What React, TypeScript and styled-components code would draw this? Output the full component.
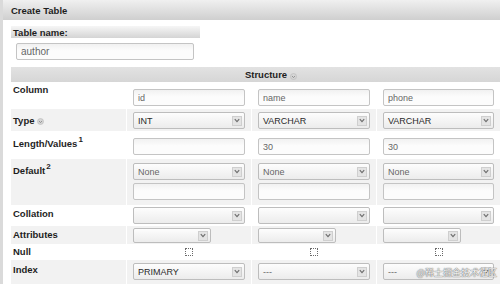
import styled, { createGlobalStyle } from "styled-components";

const GlobalStyle = createGlobalStyle`
  html, body {
    margin: 0;
    padding: 0;
    background: #fff;
    overflow: hidden;
  }
  body {
    font-family: "Liberation Sans", Arial, sans-serif;
    color: #222;
  }
`;

const Frame = styled.div`
  position: relative;
  width: 497px;
  height: 284px;
  border-left: 3px solid #dadada;
  overflow: hidden;
`;

const TitleBar = styled.div`
  height: 20px;
  box-sizing: border-box;
  padding: 5px 8px 0;
  background: linear-gradient(#f0f0f0, #cfcfcf);
  font-size: 9.5px;
  font-weight: bold;
  line-height: 12px;
  color: #1e1e1e;
`;

const Body = styled.div`
  padding: 6px 0 0 8px;
`;

const NameLabel = styled.div`
  width: 187px;
  height: 12px;
  padding-left: 2px;
  background: linear-gradient(#f6f6f6, #d4d4d4);
  font-size: 9.5px;
  font-weight: bold;
  line-height: 13px;
  color: #1e1e1e;
`;

const TextInput = styled.input<{ $w: number; $size?: number }>`
  display: block;
  box-sizing: border-box;
  width: ${(p) => p.$w}px;
  height: 17px;
  margin: 0;
  padding: 0 4px;
  border: 1px solid #c4c4c4;
  border-radius: 2px;
  background: linear-gradient(#f1f1f1, #fcfcfc 45%);
  font-family: "Liberation Sans", Arial, sans-serif;
  font-size: ${(p) => p.$size ?? 9}px;
  color: #666;
  outline: none;
`;

const NameInput = styled(TextInput)`
  margin: 5px 0 0 5px;
`;

const Structure = styled.div`
  margin-top: 7px;
  width: 490px;
  display: flex;
  flex-direction: column;
  gap: 1px;
`;

const Header = styled.div`
  height: 15px;
  display: flex;
  align-items: center;
  justify-content: center;
  gap: 3px;
  padding-left: 30px;
  background: linear-gradient(#e2e2e2, #d6d6d6);
  font-size: 9.5px;
  font-weight: bold;
  color: #1e1e1e;
`;

const Row = styled.div<{ $h: number }>`
  display: grid;
  grid-template-columns: 115px 124px 124px 123px;
  column-gap: 1px;
  height: ${(p) => p.$h}px;
`;

const LabelCell = styled.div<{ $pt: number; $alt?: boolean }>`
  padding: ${(p) => p.$pt}px 0 0 2px;
  background: ${(p) => (p.$alt ? "#f2f2f2" : "#fff")};
  font-size: 9.5px;
  font-weight: bold;
  line-height: 12px;
  color: #1e1e1e;
  display: flex;
  align-items: flex-start;
  gap: 3px;
`;

const Sup = styled.span`
  display: inline-block;
  font-size: 8px;
  line-height: 8px;
  margin: -2px 0 0 -2px;
`;

const Cell = styled.div<{ $pt: number; $alt?: boolean; $center?: boolean }>`
  box-sizing: border-box;
  padding: ${(p) => p.$pt}px 0 0 ${(p) => (p.$center ? 0 : 6)}px;
  background: ${(p) => (p.$alt ? "#f2f2f2" : "#fff")};
  display: flex;
  flex-direction: column;
  align-items: ${(p) => (p.$center ? "center" : "flex-start")};
  gap: 3px;
`;

const SelectBox = styled.div<{ $w: number; $h?: number }>`
  box-sizing: border-box;
  width: ${(p) => p.$w}px;
  height: ${(p) => p.$h ?? 17}px;
  display: flex;
  align-items: center;
  justify-content: space-between;
  padding: 0 2px 0 4px;
  border: 1px solid #bdbdbd;
  border-radius: 2px;
  background: linear-gradient(#fdfdfd, #ececec);
  font-size: 9px;
`;

const SelectText = styled.span<{ $muted?: boolean }>`
  color: ${(p) => (p.$muted ? "#666" : "#2a2a2a")};
  white-space: nowrap;
`;

const Arrow = styled.span`
  box-sizing: border-box;
  width: 10px;
  height: 10px;
  display: flex;
  align-items: center;
  justify-content: center;
  border: 1px solid #cfcfcf;
  background: #e4e4e4;
`;

const Check = styled.span`
  box-sizing: border-box;
  width: 8px;
  height: 8px;
  border: 1px dotted #6a6a6a;
  background: #fff;
`;

const Watermark = styled.div`
  position: absolute;
  right: 3px;
  bottom: 5px;
  font-family: "Noto Sans CJK SC", "Liberation Sans", sans-serif;
  font-size: 9px;
  line-height: 12px;
  color: rgba(255, 255, 255, 0.92);
  text-shadow: 0 0 1px #555, 0 0 1px #777;
`;

const HelpIcon = () => (
  <svg width="7" height="7" viewBox="0 0 7 7" style={{ marginTop: 3 }}>
    <circle cx="3.5" cy="3.5" r="3" fill="#d6d6d6" stroke="#b8b8b8" strokeWidth="0.6" />
    <path d="M2 3 L3.5 4.6 L5 3" fill="none" stroke="#8a8a8a" strokeWidth="0.9" />
  </svg>
);

const Select = ({ w, text, muted, h }: { w: number; text?: string; muted?: boolean; h?: number }) => (
  <SelectBox $w={w} $h={h}>
    <SelectText $muted={muted}>{text}</SelectText>
    <Arrow>
      <svg width="6" height="5" viewBox="0 0 6 5">
        <path d="M0.8 1.2 L3 3.6 L5.2 1.2" fill="none" stroke="#6e6e6e" strokeWidth="1.2" />
      </svg>
    </Arrow>
  </SelectBox>
);

const columns = [
  { name: "id", type: "INT", length: "", index: "PRIMARY" },
  { name: "name", type: "VARCHAR", length: "30", index: "---" },
  { name: "phone", type: "VARCHAR", length: "30", index: "---" },
];

export default function App() {
  return (
    <Frame>
      <GlobalStyle />
      <TitleBar>Create Table</TitleBar>
      <Body>
        <NameLabel>Table name:</NameLabel>
        <NameInput $w={178} $size={10} defaultValue="author" />
        <Structure>
          <Header>
            Structure <HelpIcon />
          </Header>

          <Row $h={25}>
            <LabelCell $pt={1}>Column</LabelCell>
            {columns.map((c, i) => (
              <Cell key={i} $pt={6}>
                <TextInput $w={i === 2 ? 111 : 112} defaultValue={c.name} />
              </Cell>
            ))}
          </Row>

          <Row $h={22}>
            <LabelCell $pt={6} $alt>
              Type <HelpIcon />
            </LabelCell>
            {columns.map((c, i) => (
              <Cell key={i} $pt={3} $alt>
                <Select w={i === 2 ? 111 : 112} text={c.type} />
              </Cell>
            ))}
          </Row>

          <Row $h={26}>
            <LabelCell $pt={6}>
              Length/Values
              <Sup>1</Sup>
            </LabelCell>
            {columns.map((c, i) => (
              <Cell key={i} $pt={6}>
                <TextInput $w={i === 2 ? 111 : 112} defaultValue={c.length} />
              </Cell>
            ))}
          </Row>

          <Row $h={46}>
            <LabelCell $pt={6} $alt>
              Default
              <Sup>2</Sup>
            </LabelCell>
            {columns.map((c, i) => (
              <Cell key={i} $pt={4} $alt>
                <Select w={i === 2 ? 111 : 112} text="None" muted />
                <TextInput $w={i === 2 ? 111 : 112} defaultValue="" />
              </Cell>
            ))}
          </Row>

          <Row $h={19}>
            <LabelCell $pt={2}>Collation</LabelCell>
            {columns.map((c, i) => (
              <Cell key={i} $pt={1}>
                <Select w={i === 2 ? 111 : 112} />
              </Cell>
            ))}
          </Row>

          <Row $h={18}>
            <LabelCell $pt={3} $alt>
              Attributes
            </LabelCell>
            {columns.map((c, i) => (
              <Cell key={i} $pt={2} $alt>
                <Select w={78} h={15} />
              </Cell>
            ))}
          </Row>

          <Row $h={14}>
            <LabelCell $pt={1}>Null</LabelCell>
            {columns.map((c, i) => (
              <Cell key={i} $pt={3} $center>
                <Check />
              </Cell>
            ))}
          </Row>

          <Row $h={24}>
            <LabelCell $pt={4} $alt>
              Index
            </LabelCell>
            {columns.map((c, i) => (
              <Cell key={i} $pt={3} $alt>
                <Select w={i === 2 ? 111 : 112} text={c.index} muted={c.index === "---"} />
              </Cell>
            ))}
          </Row>
        </Structure>
      </Body>
      <Watermark>@稀土掘金技术社区</Watermark>
    </Frame>
  );
}
